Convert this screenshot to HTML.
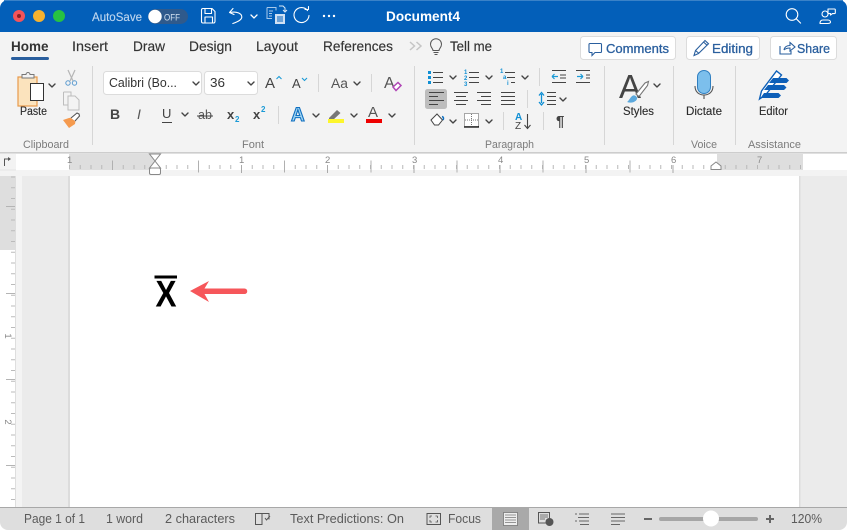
<!DOCTYPE html>
<html>
<head>
<meta charset="utf-8">
<title>Document4</title>
<style>
html,body{margin:0;padding:0;background:#fff;width:847px;height:530px;overflow:hidden}
svg{display:block;position:absolute;left:0;top:0}
text{font-family:"Liberation Sans",sans-serif;white-space:pre}
.tab{font-size:14px;fill:#333;stroke:#333;stroke-width:.15}
.rb{font-size:11.5px;fill:#2b2b2b;stroke:#2b2b2b;stroke-width:.12}
.gl{font-size:11px;fill:#7b7b7b}
.st{font-size:13px;fill:#5b5b5b}
.btn{font-size:13px;fill:#2a5f9e;stroke:#2a5f9e;stroke-width:.3}
.rn{font-size:9.5px;fill:#888}
.ch{fill:none;stroke:#444;stroke-width:1.4;stroke-linecap:round;stroke-linejoin:round}
.sep{stroke:#d6d6d6;stroke-width:1}
.w{fill:none;stroke:#fff;stroke-width:1.1;stroke-linecap:round;stroke-linejoin:round}
</style>
</head>
<body>
<svg width="847" height="530" viewBox="0 0 847 530" xmlns="http://www.w3.org/2000/svg">
<defs>
<path id="c" d="M0 0l3 3 3-3" class="ch"/>
</defs>

<!-- ribbon bg -->
<path d="M0 8a8 8 0 0 1 8-8h831a8 8 0 0 1 8 8v145H0z" fill="#f3f3f3"/>
<!-- title bar -->
<path d="M0 32V8a8 8 0 0 1 8-8h831a8 8 0 0 1 8 8v24z" fill="#035fb9"/>
<path d="M4 .5h839" stroke="#3a82c8" stroke-width="1"/>

<circle cx="19" cy="16" r="6" fill="#f4545a"/><circle cx="19" cy="16" r="2" fill="#8e1f24"/>
<circle cx="39" cy="16" r="6" fill="#f6b22f"/>
<circle cx="59" cy="16" r="6" fill="#27c242"/>

<text x="92" y="21" font-size="12" fill="#bdd5ee" stroke="#bdd5ee" stroke-width=".15" textLength="50" lengthAdjust="spacingAndGlyphs">AutoSave</text>
<rect x="148" y="9" width="40" height="15" rx="7.5" fill="#2f5a8c"/>
<circle cx="155" cy="16.500" r="6.700" fill="#fff"/>
<text x="164" y="20.500" font-size="9" fill="#d3e1f0" textLength="16" lengthAdjust="spacingAndGlyphs">OFF</text>

<!-- save -->
<path d="M201.500 10a1.500 1.500 0 0 1 1.500-1.500h9l3 3v10a1.500 1.500 0 0 1-1.500 1.500h-10.500a1.500 1.500 0 0 1-1.500-1.500zM205 9v4.500h6.500V9M205 22.500v-5.500h7.500v5.500" class="w"/>
<!-- undo -->
<path d="M233 8.500l-3.500 4 4.500 2M229.800 12.500c7-1.500 12 1 12 4.500 0 2.500-3 4.500-9 6.500" class="w"/>
<path d="M251 15l3 3 3-3" fill="none" stroke="#fff" stroke-width="1.300" stroke-linecap="round"/>
<!-- doc icon -->
<path d="M267 7.500h9v3M267 7.500v11h5M269 11h4M269 13.500h3M269 16h3" fill="none" stroke="#a9c9ea" stroke-width="1"/>
<rect x="275" y="14" width="10" height="10" fill="#cfe0f3"/>
<path d="M277 17h6M277 19h6M277 21h6" stroke="#035fb9" stroke-width="1"/>
<path d="M279 6h4l2 2v3M283 10l2 2 2-2" fill="none" stroke="#dbe8f6" stroke-width="1"/>
<!-- redo -->
<path d="M307.500 10.500a7.500 7.500 0 1 0 1.500 5M305 9.500h3.500v-3" class="w"/>
<circle cx="324" cy="16" r="1.200" fill="#fff"/><circle cx="329" cy="16" r="1.200" fill="#fff"/><circle cx="334" cy="16" r="1.200" fill="#fff"/>
<text x="386" y="21" font-size="13.500" font-weight="bold" fill="#fff" textLength="74" lengthAdjust="spacingAndGlyphs">Document4</text>
<!-- search -->
<circle cx="792" cy="14.500" r="5.800" class="w"/><path d="M796.300 18.800l4.300 4.300" class="w"/>
<!-- people -->
<circle cx="825" cy="14" r="3" class="w"/><path d="M820 23.500c0-2 1-3.500 3-3.500h5c1.500 0 2.500 1 2.500 2 0 1.500-1.500 1.500-3 1.500z" class="w"/>
<path d="M828 9h6.500a.8.800 0 0 1 .8.800v3a.8.800 0 0 1-.8.800h-2l-2 1.500v-1.500h-2.500z" class="w"/>

<!-- tabs -->
<text x="11" y="51" class="tab" font-weight="bold" textLength="37.500" lengthAdjust="spacingAndGlyphs" style="stroke-width:0">Home</text>
<rect x="11" y="57" width="38" height="3" rx="1.500" fill="#2a5f9e"/>
<text x="72" y="51" class="tab" textLength="36" lengthAdjust="spacingAndGlyphs">Insert</text>
<text x="133" y="51" class="tab" textLength="32" lengthAdjust="spacingAndGlyphs">Draw</text>
<text x="189" y="51" class="tab" textLength="43" lengthAdjust="spacingAndGlyphs">Design</text>
<text x="256" y="51" class="tab" textLength="42" lengthAdjust="spacingAndGlyphs">Layout</text>
<text x="323" y="51" class="tab" textLength="70" lengthAdjust="spacingAndGlyphs">References</text>
<path d="M410 42l4.500 4-4.500 4M416.500 42l4.500 4-4.500 4" fill="none" stroke="#c5c5c5" stroke-width="1.500"/>
<path d="M433 50.500c0-2-2.500-3-2.500-6.300a5.500 5.500 0 0 1 11 0c0 3.300-2.500 4.300-2.500 6.300zM433.500 52.500h5M434.500 54.500h3" fill="none" stroke="#555" stroke-width="1"/>
<text x="450" y="51" class="tab" textLength="42" lengthAdjust="spacingAndGlyphs">Tell me</text>

<!-- buttons -->
<rect x="580.500" y="36.500" width="95" height="23" rx="3" fill="#fff" stroke="#dcdcdc"/>
<path d="M590 43.500h10.500a1 1 0 0 1 1 1v7a1 1 0 0 1-1 1h-5.500l-3 3v-3h-2a1 1 0 0 1-1-1v-7a1 1 0 0 1 1-1z" fill="none" stroke="#2a5f9e" stroke-width="1.100"/>
<text x="606" y="53" class="btn" textLength="63" lengthAdjust="spacingAndGlyphs">Comments</text>
<rect x="686.500" y="36.500" width="73" height="23" rx="3" fill="#fff" stroke="#dcdcdc"/>
<path d="M694 55.500l1.500-5 9.500-10 3.500 3.300-10 9.700zM695.500 50.500l3 2.500M703.500 42l3.500 3.200" fill="none" stroke="#2a5f9e" stroke-width="1.100"/>
<text x="712" y="53" class="btn" textLength="41" lengthAdjust="spacingAndGlyphs">Editing</text>
<rect x="770.500" y="36.500" width="66" height="23" rx="3" fill="#fff" stroke="#dcdcdc"/>
<path d="M780 46v8h11v-3M784 50c.5-3 3-4.500 6-4.500v-3l5 4.500-5 4v-3c-2.500 0-4.500.5-6 2" fill="none" stroke="#2a5f9e" stroke-width="1.100"/>
<text x="797" y="53" class="btn" textLength="33" lengthAdjust="spacingAndGlyphs">Share</text>

<!-- separators -->
<path d="M92.500 66v79M414.500 66v79M604.500 66v79M673.500 66v79M735.500 66v79" class="sep"/>
<path d="M318.500 74v18M371.500 74v18M278.500 106v18M539.500 68v18M527.500 90v18M503.500 112v18M543.500 112v18" class="sep"/>

<!-- clipboard -->
<rect x="18" y="77" width="19" height="29" fill="#fbe3bd" stroke="#e89a4c" stroke-width="1.200"/>
<path d="M22 77v-2.500h4a2 2 0 0 1 4 0h4V78H22z" fill="#f3f3f3" stroke="#777" stroke-width="1"/>
<rect x="30.500" y="83.500" width="13" height="17" fill="#fff" stroke="#333" stroke-width="1"/>
<use href="#c" x="49" y="84"/>
<text x="20" y="115" class="rb" textLength="27" lengthAdjust="spacingAndGlyphs">Paste</text>
<path d="M68 70l5 11M75 70l-5 11" stroke="#b5b5b5" stroke-width="1.200"/>
<circle cx="68" cy="83" r="2.200" fill="none" stroke="#5b9bd0"/><circle cx="74.500" cy="83" r="2.200" fill="none" stroke="#5b9bd0"/>
<path d="M63.500 92h7.500v3.500M63.500 92v13h4" fill="none" stroke="#bdbdbd" stroke-width="1"/>
<path d="M68 96h7l4 4v10H68z" fill="none" stroke="#bdbdbd" stroke-width="1"/>
<path d="M63 120l6 8 6-4 1-7-7 1z" fill="#f59a4e"/>
<path d="M71 118l6-5 2 1 .5 2-4.500 5" fill="#fff" stroke="#555" stroke-width="1.100"/>
<text x="23" y="148" class="gl" textLength="46" lengthAdjust="spacingAndGlyphs">Clipboard</text>

<!-- font -->
<rect x="103.500" y="71.500" width="98" height="23" rx="3" fill="#fff" stroke="#dcdcdc"/>
<text x="109" y="87" font-size="13" fill="#333" textLength="68" lengthAdjust="spacingAndGlyphs">Calibri (Bo...</text>
<use href="#c" x="193" y="82"/>
<rect x="204.500" y="71.500" width="53" height="23" rx="3" fill="#fff" stroke="#dcdcdc"/>
<text x="210" y="87" font-size="13" fill="#333" textLength="15" lengthAdjust="spacingAndGlyphs">36</text>
<use href="#c" x="248" y="82"/>
<text x="265" y="88" font-size="15" fill="#444">A</text><path d="M276.500 79l2.500-2.500 2.500 2.500" fill="none" stroke="#1a9ad6" stroke-width="1.100"/>
<text x="292" y="88" font-size="13" fill="#444">A</text><path d="M302 78l2.500 2.500 2.500-2.500" fill="none" stroke="#1a9ad6" stroke-width="1.100"/>
<text x="331" y="88" font-size="13.500" fill="#555" textLength="17" lengthAdjust="spacingAndGlyphs">Aa</text>
<use href="#c" x="354" y="82"/>
<text x="384" y="88" font-size="16" fill="#555">A</text>
<path d="M393 87l5-4.500 3 3-5 5z" fill="#fff" stroke="#b045b5" stroke-width="1.500"/>

<text x="110" y="119" font-size="14" font-weight="bold" fill="#444">B</text>
<text x="137" y="119" font-size="14" font-style="italic" fill="#555">I</text>
<text x="162" y="118" font-size="13" fill="#444">U</text><path d="M162 122.500h10" stroke="#444" stroke-width="1"/>
<use href="#c" x="182" y="113"/>
<text x="198" y="119" font-size="13" fill="#555" textLength="14" lengthAdjust="spacingAndGlyphs">ab</text><path d="M197 116h16" stroke="#444" stroke-width="1"/>
<text x="227" y="119" font-size="13" font-weight="bold" fill="#444">x</text><text x="235" y="122" font-size="8" font-weight="bold" fill="#1a9ad6">2</text>
<text x="253" y="119" font-size="13" font-weight="bold" fill="#444">x</text><text x="261" y="112" font-size="8" font-weight="bold" fill="#1a9ad6">2</text>
<text x="291" y="121" font-size="19" font-weight="bold" fill="#9fd3f0" stroke="#0f6fc0" stroke-width="1.100">A</text>
<use href="#c" x="313" y="114"/>
<path d="M329 118l8-8 3.500 3-8 7.500h-3.500z" fill="#777"/>
<rect x="328" y="119" width="16" height="4" fill="#fdf62c"/>
<use href="#c" x="351" y="114"/>
<text x="368" y="117" font-size="15" fill="#555">A</text>
<rect x="366" y="119" width="16" height="4" fill="#ee0000"/>
<use href="#c" x="389" y="114"/>
<text x="242" y="148" class="gl" textLength="22" lengthAdjust="spacingAndGlyphs">Font</text>

<!-- paragraph row 1 -->
<g fill="#0f8fd4">
<rect x="428" y="71" width="3" height="3"/><rect x="428" y="76" width="3" height="3"/><rect x="428" y="81" width="3" height="3"/>
</g>
<path d="M433 72.500h10M433 77.500h10M433 82.500h10M469 72.500h10M469 77.500h10M469 82.500h10M505 72.500h10M507 77.500h8M511 82.500h4" stroke="#444" stroke-width="1"/>
<use href="#c" x="450" y="76"/><use href="#c" x="486" y="76"/><use href="#c" x="522" y="76"/>
<g font-size="6" font-weight="bold" fill="#0f8fd4"><text x="464" y="74">1</text><text x="464" y="80">2</text><text x="464" y="86">3</text><text x="500" y="73">1</text><text x="503" y="79">a</text><text x="507" y="85">i</text></g>
<path d="M552 76.500h6M552 76.500l2.500-2.500M552 76.500l2.500 2.500M577 76.500h6M583 76.500l-2.500-2.500M583 76.500l-2.500 2.500" fill="none" stroke="#1a9ad6" stroke-width="1.200"/>
<path d="M552 70.500h14M560 75h6M560 78h6M552 82.500h14M576 70.500h14M586 75h4M586 78h4M576 82.500h14" stroke="#444" stroke-width="1"/>
<!-- row 2 -->
<rect x="425" y="89" width="22" height="20" rx="2.500" fill="#bdbdbd"/>
<path d="M429 92.500h15M429 96.500h9M429 100.500h15M429 104.500h9M454 92.500h14M456 96.500h10M454 100.500h14M456 104.500h10M477 92.500h14M481 96.500h10M477 100.500h14M481 104.500h10M501 92.500h14M501 96.500h14M501 100.500h14M501 104.500h14M547 92.500h9M547 96.500h9M547 100.500h9M547 104.500h9" stroke="#444" stroke-width="1.100"/>
<path d="M541.500 94v9M539 95.500l2.500-3 2.500 3M539 102l2.500 3 2.500-3" fill="none" stroke="#0f8fd4" stroke-width="1.300"/>
<use href="#c" x="560" y="98"/>
<!-- row 3 -->
<path d="M431 120l6-6 5.500 6-4 5h-4z" fill="#fff" stroke="#444" stroke-width="1"/>
<path d="M443 120c1-2 .5-3-1-3.500" fill="none" stroke="#0f6fc0" stroke-width="1.500"/>
<use href="#c" x="450" y="120"/>
<rect x="464.500" y="113.500" width="14" height="13" fill="#fff" stroke="#555" stroke-dasharray="1 1"/>
<path d="M471.500 114v12M465 120h13" stroke="#777" stroke-dasharray="1 1"/>
<path d="M464 127h15" stroke="#111" stroke-width="1.300"/>
<use href="#c" x="486" y="120"/>
<text x="515" y="120" font-size="10" font-weight="bold" fill="#0f8fd4">A</text>
<text x="515" y="129" font-size="10" fill="#444">Z</text>
<path d="M527.500 114v14M524.500 125l3 3.500 3-3.500" fill="none" stroke="#444" stroke-width="1.100"/>
<text x="556" y="126" font-size="15" fill="#444" font-weight="bold">¶</text>
<text x="485" y="148" class="gl" textLength="49" lengthAdjust="spacingAndGlyphs">Paragraph</text>

<!-- styles -->
<text x="619" y="98" font-size="33" fill="#444" textLength="22" lengthAdjust="spacingAndGlyphs">A</text>
<path d="M636 94l9-11 3.500-1.500-1 4-8.500 11z" fill="#fff" stroke="#777" stroke-width="1.100"/>
<path d="M627 102c2-1 3-5 6-6.500 2.500-.5 4.500 1.500 4 3.500-1.500 3.500-6 4.500-10 3z" fill="#5ba8dc"/>
<use href="#c" x="654" y="84"/>
<text x="623" y="115" class="rb" textLength="31" lengthAdjust="spacingAndGlyphs">Styles</text>

<!-- mic -->
<rect x="697.500" y="70.500" width="13" height="23" rx="6.500" fill="#7cbfec" stroke="#2f7fc1" stroke-width="1"/>
<path d="M695 86c0 6 4 9 9 9s9-3 9-9M704 95v4" fill="none" stroke="#555" stroke-width="1.100"/>
<text x="686" y="115" class="rb" textLength="36" lengthAdjust="spacingAndGlyphs">Dictate</text>
<text x="691" y="148" class="gl" textLength="26" lengthAdjust="spacingAndGlyphs">Voice</text>

<!-- editor -->
<path d="M759.500 99l2-8 15-20 5 4-16 20z" fill="#fff" stroke="#0d5fb8" stroke-width="1.400"/>
<path d="M773 78h13.500l2.500 2.500-2.500 2.500H769zM768 85h16l2.500 2.500-2.500 2.500h-20zM764 93h14.500l2.500 2.500-2.500 2.500h-18z" fill="#0d5fb8"/>
<text x="759" y="115" class="rb" textLength="29" lengthAdjust="spacingAndGlyphs">Editor</text>
<text x="748" y="148" class="gl" textLength="53" lengthAdjust="spacingAndGlyphs">Assistance</text>

<!-- ruler -->
<rect x="0" y="152" width="847" height="1.500" fill="#cdcdcd"/>
<rect x="0" y="153.500" width="847" height="22.500" fill="#f3f3f3"/>
<rect x="16" y="154" width="831" height="16" fill="#fff"/>
<rect x="69" y="154" width="85" height="16" fill="#dedede"/>
<rect x="717" y="154" width="86" height="16" fill="#dedede"/>
<path d="M0 170h16" stroke="#e4e4e4"/>
<path d="M4.500 166v-7h4" fill="none" stroke="#555" stroke-width="1"/><path d="M8 157l3 2-3 2z" fill="#555"/>
<path d="M69 167H803" stroke="#b8b8b8" stroke-width="4" stroke-dasharray="1 9.750" fill="none"/>
<path d="M112.500 160.500v9.500M198.500 160.500v12M284.500 160.500v12M371 160.500v12M457 160.500v12M543 160.500v12M630 160.500v12" stroke="#b0b0b0"/>
<path d="M241.500 165v8M327.500 165v8M414 165v8M500 165v8M586 165v8M673 165v8" stroke="#aaa"/>
<text x="67" y="163" class="rn">1</text><text x="239" y="163" class="rn">1</text><text x="325" y="163" class="rn">2</text><text x="412" y="163" class="rn">3</text><text x="498" y="163" class="rn">4</text><text x="584" y="163" class="rn">5</text><text x="671" y="163" class="rn">6</text><text x="757" y="163" class="rn">7</text>
<path d="M149.500 154h11l-5.500 7 5.500 7h-11l5.500-7z" fill="#fff" stroke="#888"/>
<rect x="149.500" y="168" width="11" height="6.500" rx="1.500" fill="#fff" stroke="#888"/>
<path d="M711 169.500v-3.500l5-4 5 4v3.500z" fill="#fff" stroke="#888"/>

<!-- doc area -->
<rect x="0" y="176" width="847" height="331" fill="#ebebeb"/>
<rect x="16" y="176" width="6" height="331" fill="#f4f4f4"/>
<rect x="0" y="176" width="16" height="74" fill="#dedede"/>
<rect x="0" y="250" width="16" height="257" fill="#fff"/>
<path d="M15.500 176V507" stroke="#dedede" stroke-width="1"/>
<path d="M13 176.500V507" stroke="#bbb" stroke-width="4" stroke-dasharray="1 9.750" fill="none"/>
<path d="M6 206.500h9M6 293.500h9M6 379.500h9M6 465.500h9" stroke="#b4b4b4"/>
<text transform="translate(5,336) rotate(90)" class="rn" text-anchor="middle">1</text>
<text transform="translate(5,422) rotate(90)" class="rn" text-anchor="middle">2</text>
<rect x="68" y="176" width="2" height="331" fill="#dcdcdc"/>
<rect x="799" y="176" width="1.500" height="331" fill="#dcdcdc"/>
<rect x="70" y="176" width="729" height="331" fill="#fff"/>

<!-- content -->
<rect x="154.500" y="275.500" width="22.500" height="3" fill="#000"/>
<text transform="translate(155.500,306.500) scale(.84,1)" font-size="37.500" font-weight="bold" fill="#000">X</text>
<path d="M190 291l19-10-4.500 7.500h40a2.700 2.700 0 0 1 0 5.500h-40l4.500 8z" fill="#f6565a"/>

<!-- status -->
<path d="M0 507h847v15a8 8 0 0 1-8 8H8a8 8 0 0 1-8-8z" fill="#dedede"/>
<path d="M0 507.500h847" stroke="#a8a8a8"/>
<text x="24" y="523" class="st" textLength="61" lengthAdjust="spacingAndGlyphs">Page 1 of 1</text>
<text x="106" y="523" class="st" textLength="37" lengthAdjust="spacingAndGlyphs">1 word</text>
<text x="165" y="523" class="st" textLength="70" lengthAdjust="spacingAndGlyphs">2 characters</text>
<path d="M262 513.500h-6.500v11h6.500zM262 513.500h7v6M265 518l1.500 2 3.500-4" fill="none" stroke="#555" stroke-width="1"/>
<text x="290" y="523" class="st" textLength="114" lengthAdjust="spacingAndGlyphs">Text Predictions: On</text>
<path d="M427 513.500h13.500v11H427z" fill="none" stroke="#555" stroke-width="1"/>
<path d="M430 518v-2h2M437.500 516h-2M437.500 518v-2M430 520v2h2M437.500 520v2h-2" fill="none" stroke="#555" stroke-width=".8"/>
<text x="448" y="523" class="st" textLength="33" lengthAdjust="spacingAndGlyphs">Focus</text>
<rect x="492" y="508" width="37" height="22" fill="#a9a9a9"/>
<rect x="503.500" y="512.500" width="14" height="13" fill="#eee" stroke="#777" stroke-width=".8"/>
<path d="M505 515h11M505 517.500h11M505 520h11M505 522.500h11" stroke="#777" stroke-width=".8"/>
<rect x="538.500" y="512.500" width="11" height="10.500" fill="none" stroke="#555"/>
<path d="M540 515h8M540 517h8M540 519h5" stroke="#555" stroke-width=".8"/>
<circle cx="549.500" cy="522" r="4" fill="#555"/>
<path d="M575 514h2M579 514h10M578 517.500h11M575 521h2M579 521h10M580 524.500h9" stroke="#666" stroke-width="1"/>
<path d="M611 514h14M611 517.500h14M611 521h14M611 524.500h9" stroke="#666" stroke-width="1"/>
<path d="M644 519h8" stroke="#666" stroke-width="2"/>
<rect x="659" y="517" width="99" height="4" rx="2" fill="#a6a6a6"/>
<circle cx="711" cy="518.500" r="8" fill="#fff"/>
<path d="M766 519h8M770 515v8" stroke="#666" stroke-width="2"/>
<text x="791" y="523" class="st" textLength="31" lengthAdjust="spacingAndGlyphs">120%</text>
</svg>
</body>
</html>
